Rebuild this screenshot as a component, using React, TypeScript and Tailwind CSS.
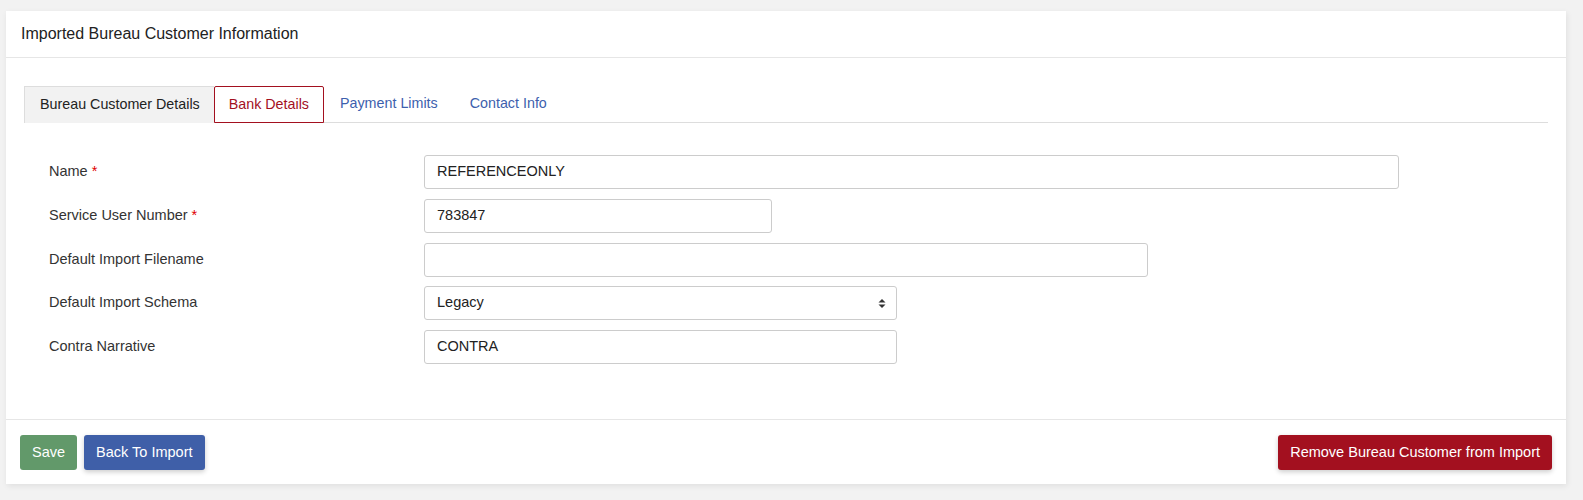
export default function App() {
  const rows: { label: string; required?: boolean; value: string; width: string; select?: boolean }[] = [
    { label: 'Name', required: true, value: 'REFERENCEONLY', width: 'w-[975px]' },
    { label: 'Service User Number', required: true, value: '783847', width: 'w-[348px]' },
    { label: 'Default Import Filename', value: '', width: 'w-[724px]' },
    { label: 'Default Import Schema', value: 'Legacy', width: 'w-[473px]', select: true },
    { label: 'Contra Narrative', value: 'CONTRA', width: 'w-[473px]' },
  ];

  return (
    <div
      className="min-h-screen bg-[#f2f2f2] pt-[11px] pl-[6px] pr-[17px] pb-[18px] text-[14.5px] text-[#333]"
      style={{ fontFamily: '"Liberation Sans", Arial, sans-serif' }}
    >
      <div className="bg-white shadow-[1px_2px_6px_rgba(0,0,0,0.08)]">
        <div className="h-[47px] flex items-center px-[15px] border-b border-[#e6e6e6] text-[#222] text-[16px]">
          Imported Bureau Customer Information
        </div>

        <div className="px-[18px] pt-[28px] pb-[55px]">
          <div className="flex h-[37px] border-b border-[#dddddd] text-[14.3px]">
            <div className="flex items-center pl-[15px] pr-[14px] bg-[#f2f2f2] border-t border-l border-[#dddddd] text-[#222] -mb-px">
              Bureau Customer Details
            </div>
            <div className="flex items-center px-[14px] border border-[#a3101f] rounded-t-[2px] text-[#a3101f] bg-white -mb-px">
              Bank Details
            </div>
            <div className="flex items-center px-[16px] text-[#3d5fad]">Payment Limits</div>
            <div className="flex items-center px-[16px] text-[#3d5fad]">Contact Info</div>
          </div>

          <div className="flex flex-col gap-[9.75px] pt-[32px]">
            {rows.map((r) => (
              <div key={r.label} className="flex items-center">
                <div className="w-[400px] pl-[25px] text-[#333]">
                  {r.label}
                  {r.required && <span className="text-[#e00000]"> *</span>}
                </div>
                <div
                  className={`${r.width} h-[34px] border border-[#cccccc] rounded-[3px] px-[12px] flex items-center justify-between text-[#222]`}
                >
                  <span>{r.value}</span>
                  {r.select && (
                    <svg width="8" height="11" viewBox="0 0 8 11" className="mr-[-2px]">
                      <path d="M4 1 L7.5 4.5 H0.5 Z" fill="#333" />
                      <path d="M4 10 L7.5 6.5 H0.5 Z" fill="#333" />
                    </svg>
                  )}
                </div>
              </div>
            ))}
          </div>
        </div>

        <div className="border-t border-[#e6e6e6] px-[14px] pt-[15px] pb-[14px] flex justify-between">
          <div className="flex gap-[7px]">
            <button className="h-[35px] px-[12px] rounded-[3px] bg-[#62996a] text-white">Save</button>
            <button className="h-[35px] px-[12px] rounded-[3px] bg-[#3f5fa8] text-white shadow-[0_2px_5px_rgba(0,0,0,0.2)]">
              Back To Import
            </button>
          </div>
          <button className="h-[35px] px-[12px] rounded-[3px] bg-[#a3101f] text-white shadow-[0_2px_5px_rgba(0,0,0,0.2)]">
            Remove Bureau Customer from Import
          </button>
        </div>
      </div>
    </div>
  );
}
